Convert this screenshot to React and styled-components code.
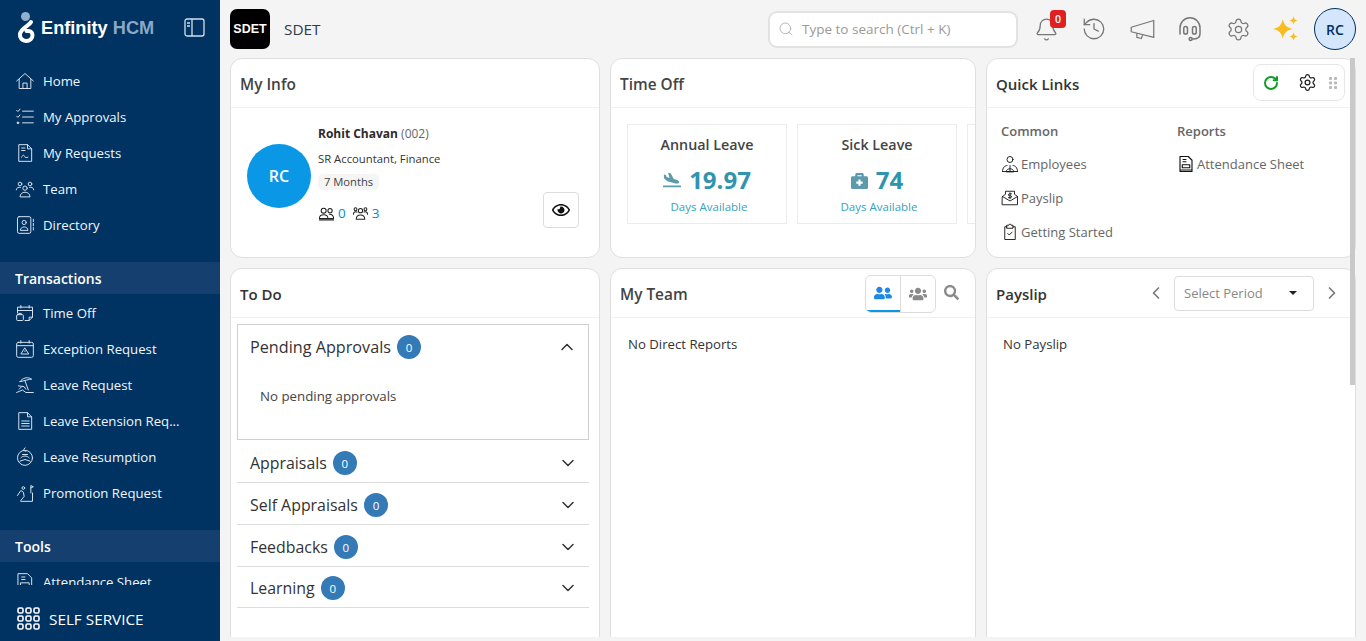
import React from 'react'
import styled, { createGlobalStyle } from 'styled-components'
import { ChevronDown, ChevronUp, ChevronLeft, ChevronRight, Search, RotateCw, Settings, History, Bell } from 'lucide-react'
import { FaPlaneArrival, FaBriefcaseMedical, FaUserFriends, FaUsers, FaSearch, FaRegEye } from 'react-icons/fa'

const Global = createGlobalStyle`
  html, body { margin: 0; height: 100%; overflow: hidden; }
  body { font-family: "Open Sans", "Noto Sans", sans-serif; background: #f4f4f4; color: #333; }
  * { box-sizing: border-box; }
`

const Shell = styled.div`
  display: flex;
  height: 641px;
  width: 1366px;
  overflow: hidden;
`

const Sidebar = styled.aside`
  width: 220px;
  flex: none;
  background: #003262;
  display: flex;
  flex-direction: column;
  color: #fff;
`

const Brand = styled.div`
  height: 63px;
  flex: none;
  display: flex;
  align-items: center;
  padding: 0 14px 7px 15px;
  svg { flex: none; }
`

const BrandName = styled.div`
  font-family: "Liberation Sans", Arial, sans-serif;
  font-weight: 700;
  font-size: 18.2px;
  margin-left: 4px;
  flex: 1;
  white-space: nowrap;
  span { color: #8ba8c6; }
`

const Nav = styled.nav`
  flex: 1;
  overflow: hidden;
  min-height: 0;
`

const NavItem = styled.div`
  height: 36px;
  display: flex;
  align-items: center;
  padding-left: 15px;
  gap: 8px;
  font-size: 13.2px;
  color: #f2f6fa;
  white-space: nowrap;
  svg { flex: none; color: #d5e0ec; }
`

const NavGroup = styled.div`
  height: 32px;
  margin-top: 19px;
  margin-bottom: ${p => p.$gap}px;
  background: #153f6e;
  display: flex;
  align-items: center;
  padding-left: 15px;
  font-size: 14px;
  font-weight: 600;
`

const SidebarFoot = styled.div`
  height: 56px;
  flex: none;
  display: flex;
  align-items: center;
  padding: 12px 0 0 17px;
  gap: 9px;
  font-size: 15.3px;
  background: #003262;
`

const Main = styled.main`
  flex: 1;
  min-width: 0;
  display: flex;
  flex-direction: column;
`

const Topbar = styled.header`
  height: 58px;
  flex: none;
  display: flex;
  align-items: center;
  padding: 0 10px;
`

const OrgLogo = styled.div`
  width: 40px;
  height: 40px;
  border-radius: 7px;
  background: #000;
  color: #fff;
  font-family: "Liberation Sans", Arial, sans-serif;
  font-weight: 700;
  font-size: 12.5px;
  display: flex;
  align-items: center;
  justify-content: center;
`

const OrgName = styled.div`
  margin-left: 14px;
  font-size: 15.3px;
  color: #2e3b4a;
  flex: 1;
`

const SearchBox = styled.div`
  width: 250px;
  height: 37px;
  background: #fff;
  border: 2px solid #e2e2e2;
  border-radius: 9px;
  display: flex;
  align-items: center;
  padding-left: 8px;
  gap: 8px;
  font-size: 13.5px;
  color: #9a9a9a;
  svg { color: #a5a5a5; }
`

const TopIcons = styled.div`
  display: flex;
  align-items: center;
  margin-left: 4px;
`

const TopIcon = styled.div`
  width: 48px;
  height: 30px;
  display: flex;
  align-items: center;
  justify-content: center;
  position: relative;
  color: #777;
`

const Badge = styled.span`
  position: absolute;
  top: -4px;
  left: 28px;
  width: 16px;
  height: 18px;
  border-radius: 4px;
  background: #e02020;
  color: #fff;
  font-size: 10.5px;
  font-weight: 600;
  display: flex;
  align-items: center;
  justify-content: center;
`

const Me = styled.div`
  width: 42px;
  height: 42px;
  margin-left: 4px;
  border-radius: 50%;
  background: #d3e6fb;
  border: 1px solid #00305f;
  color: #00305f;
  font-size: 14px;
  font-weight: 600;
  display: flex;
  align-items: center;
  justify-content: center;
`

const Board = styled.div`
  height: 579px;
  flex: none;
  overflow: hidden;
  position: relative;
  padding-left: 10px;
  display: grid;
  grid-template-columns: 370px 366px 370px;
  grid-template-rows: 200px 400px;
  column-gap: 10px;
  row-gap: 10px;
  align-content: start;
`

const ScrollThumb = styled.div`
  position: absolute;
  top: 0;
  right: 11px;
  width: 5px;
  height: 327px;
  background: #c9c9c9;
`

const Card = styled.section`
  background: #fff;
  border: 1px solid #dfdfdf;
  border-radius: 12px;
  overflow: hidden;
  display: flex;
  flex-direction: column;
  min-width: 0;
`

const CardHead = styled.div`
  height: 49px;
  flex: none;
  border-bottom: 1px solid #f1f1f1;
  display: flex;
  align-items: center;
  padding: 2px 9px 0 9px;
  position: relative;
`

const CardTitle = styled.h2`
  margin: 0;
  flex: 1;
  font-size: ${p => (p.$strong ? '15px' : '15.4px')};
  font-weight: 600;
  color: ${p => (p.$strong ? '#333' : '#444')};
`

const InfoBody = styled.div`
  display: flex;
  padding: 18px 20px 0 16px;
`

const Avatar = styled.div`
  width: 64px;
  height: 64px;
  margin-top: 18px;
  border-radius: 50%;
  background: #0a97e6;
  color: #fff;
  font-size: 16px;
  font-weight: 600;
  display: flex;
  align-items: center;
  justify-content: center;
  flex: none;
`

const InfoText = styled.div`
  margin-left: 7px;
  flex: 1;
`

const Name = styled.div`
  font-size: 12px;
  font-weight: 700;
  line-height: 16px;
  color: #2b2b2b;
  span { font-weight: 400; color: #666; }
`

const Role = styled.div`
  margin-top: 9px;
  font-size: 11.3px;
  line-height: 16px;
  color: #333;
`

const Chip = styled.div`
  display: inline-block;
  margin-top: 7px;
  padding: 0 6px;
  background: #f5f5f5;
  border-radius: 5px;
  font-size: 11.2px;
  line-height: 16px;
  color: #444;
`

const Counts = styled.div`
  display: flex;
  align-items: center;
  margin-top: 13px;
  font-size: 13.5px;
  line-height: 18px;
  color: #0a86cc;
  gap: 3px;
  svg { color: #222; }
  span { margin-right: 3px; }
`

const EyeButton = styled.button`
  width: 36px;
  height: 36px;
  margin-top: 66px;
  background: #fff;
  border: 1px solid #dcdcdc;
  border-radius: 4px;
  padding: 0;
  color: #111;
  display: flex;
  align-items: center;
  justify-content: center;
  flex: none;
`

const LeaveRow = styled.div`
  display: flex;
  gap: 10px;
  padding: 16px;
  overflow: hidden;
`

const LeaveBox = styled.div`
  width: 160px;
  height: 100px;
  flex: none;
  border: 1px solid #ececec;
  display: flex;
  flex-direction: column;
  align-items: center;
  padding-top: 10px;
`

const LeaveName = styled.div`
  font-size: 14.3px;
  font-weight: 600;
  line-height: 20px;
  color: #444;
`

const LeaveValue = styled.div`
  display: flex;
  align-items: center;
  gap: 8px;
  margin-top: 9px;
  font-size: 24px;
  line-height: 32px;
  font-weight: 700;
  color: #2f94ad;
  svg { color: #5b9bab; }
`

const LeaveCaption = styled.div`
  margin: 3px 0 0 4px;
  font-size: 11.5px;
  line-height: 16px;
  color: #3b9fb8;
`

const HeadTools = styled.div`
  position: absolute;
  top: 5px;
  right: 10px;
  width: 92px;
  height: 37px;
  background: #fff;
  border: 1px solid #e6e6e6;
  border-radius: 8px;
  display: flex;
  align-items: center;
  padding-left: 9px;
  gap: 11px;
`

const ToolGear = styled(Settings)`
  margin-left: 8px;
`

const LinkGrid = styled.div`
  display: grid;
  grid-template-columns: 176px 1fr;
  padding: 14px 0 0 14px;
`

const LinkHead = styled.div`
  font-size: 13px;
  font-weight: 600;
  line-height: 18px;
  color: #666;
  margin-bottom: 7px;
`

const LinkItem = styled.div`
  height: 34px;
  display: flex;
  align-items: center;
  gap: 2px;
  font-size: 13px;
  color: #666;
  white-space: nowrap;
  svg { color: #111; flex: none; }
`

const TodoBody = styled.div`
  padding: 6px 10px 0 6px;
`

const OpenPanel = styled.div`
  height: 116px;
  margin-bottom: 1px;
  border: 1px solid #cfcfcf;
`

const PanelHead = styled.div`
  height: ${p => p.$h}px;
  display: flex;
  align-items: center;
  padding: ${p => p.$top}px 11px 0 ${p => p.$left}px;
  font-size: ${p => p.$size}px;
  color: #333;
  gap: 6px;
  svg { margin-left: auto; color: #333; }
`

const PanelRow = styled.div`
  border-bottom: 1px solid #dcdcdc;
  &:last-child { margin-top: -1px; }
`

const Count = styled.span`
  width: 24px;
  height: 24px;
  border-radius: 50%;
  background: #337ab7;
  color: #fff;
  font-size: 11.5px;
  display: flex;
  align-items: center;
  justify-content: center;
`

const PanelNote = styled.div`
  padding: 18px 0 0 22px;
  font-size: 13.3px;
  line-height: 18px;
  color: #444;
`

const Empty = styled.div`
  padding: 17px 0 0 ${p => p.$left}px;
  font-size: 13.2px;
  line-height: 18px;
  color: #333;
`

const TeamTabs = styled.div`
  display: flex;
  width: 71px;
  height: 38px;
  margin: -1px 0 0;
  border: 1px solid #dcdcdc;
  border-radius: 6px;
  overflow: hidden;
`

const TeamTab = styled.div`
  flex: 1;
  display: flex;
  align-items: center;
  justify-content: center;
  color: ${p => (p.$active ? '#1e88e5' : '#8a8a8a')};
  border-bottom: ${p => (p.$active ? '2px solid #0a97e6' : '0')};
  & + & { border-left: 1px solid #dcdcdc; }
`

const TeamSearch = styled.div`
  width: 30px;
  margin-top: -3px;
  display: flex;
  justify-content: center;
  color: #8a8a8a;
`

const PeriodSelect = styled.div`
  width: 140px;
  height: 35px;
  margin: 0 8px;
  border: 1px solid #dcdcdc;
  border-radius: 4px;
  display: flex;
  align-items: center;
  justify-content: space-between;
  padding: 0 16px 0 9px;
  font-size: 13px;
  color: #888;
`

const Caret = styled.span`
  width: 0;
  height: 0;
  border-left: 4px solid transparent;
  border-right: 4px solid transparent;
  border-top: 4px solid #222;
`

const PayHead = styled.div`
  display: flex;
  align-items: center;
  margin: -2px 4px 0 0;
  svg { color: #777; }
`

/* icons the packages don't have, drawn to follow the reference */
const Line = ({ size = 20, sw = 1.2, children }) => (
  <svg width={size} height={size} viewBox="0 0 24 24" fill="none" stroke="currentColor" strokeWidth={sw} strokeLinecap="round" strokeLinejoin="round">
    {children}
  </svg>
)

const HomeIcon = () => <Line><path d="M2 12 12 3l10 9M5 10v11h14V10M9.5 21v-6.5h5V21" /></Line>
const ApprovalsIcon = () => <Line><path d="M2 4l1.5 1.5L6 2.5M2 11l1.5 1.5L6 9.5M9 5h13M9 12h13M9 19h13" /><circle cx="3.5" cy="19" r="1" fill="currentColor" /></Line>
const RequestsIcon = () => <Line><path d="M5 2h10l5 5v15H5zM15 2v5h5M8 6h4M8 9h4M8 17c1.5-3 2.5-3 3.5-1s2 2 4 1" /></Line>
const TeamIcon = () => <Line><circle cx="12" cy="11" r="2.6" /><circle cx="6" cy="6" r="2.2" /><circle cx="18" cy="6" r="2.2" /><path d="M6 21c0-7 12-7 12 0zM1.5 13c.5-3 3-3.5 5-3M22.5 13c-.5-3-3-3.5-5-3" /></Line>
const DirectoryIcon = () => <Line><rect x="3" y="2" width="16" height="20" rx="2" /><circle cx="11" cy="9" r="2.5" /><path d="M6.5 18c0-5 9-5 9 0zM22 5v3M22 10v3M22 15v3" /></Line>
const TimeOffIcon = () => <Line><path d="M3 12V5h18v12l-4 4h-5M3 9h18M7 3v3M17 3v3M17 21v-4h4" /><rect x="2" y="14" width="8" height="7" rx="1" /><path d="M4.5 14v-1.5h3V14" /></Line>
const ExceptionIcon = () => <Line><rect x="2" y="4" width="20" height="18" rx="2" /><path d="M2 8h20M7 2v3M17 2v3M12 11l4.5 7h-9zM12 14v1" /></Line>
const BeachIcon = () => <Line><path d="M6 8c3-5 10-6 14-3-3 0-9 2-14 3zM12 7l4 11M2 21l7-3 4 3h9M4 13l7 1 2 3M5 17l3-3" /></Line>
const FileLinesIcon = () => <Line><path d="M5 2h10l5 5v15H5zM15 2v5h5M8 12h9M8 15h9M8 18h9" /></Line>
const ResumeIcon = () => <Line><circle cx="12" cy="13" r="9" /><path d="M12 1l-2 3 3 1M7 13c3-3 7-3 10 0M6 17l6-2 6 2M9 9h6" /></Line>
const PromoteIcon = () => <Line><path d="M19 12V3l3 1.5L19 6M21 12v10H7M3 15l4-6 3 2 1 5-4 5" /><circle cx="10" cy="6" r="1.6" /></Line>
const SheetIcon = ({ size = 20, sw = 1.2 }) => <Line size={size} sw={sw}><path d="M4 2h11l5 5v15H4zM8 6h4M8 9h4M7 13h10v4H7zM4 20h16" /></Line>
const HeadsetIcon = () => <Line size={30} sw={1.2}><path d="M4 16v-5a8 8 0 0 1 16 0v5c0 3-3 4-6 4" /><rect x="7" y="10" width="3" height="6" rx="1.5" /><rect x="14" y="10" width="3" height="6" rx="1.5" /><circle cx="12.5" cy="20" r="1.2" /></Line>
const HornIcon = () => <Line size={27} sw={1.1}><path d="M2 10l20-6v15L2 14zM7 16v3l4 1 1-3" /></Line>
const EmployeesIcon = () => <Line size={18}><circle cx="12" cy="6" r="4" /><path d="M2 22c0-5 3-8 6-8M22 22c0-5-3-8-6-8M7 22c0-5 10-5 10 0zM12 14v8M2 22h20" /></Line>
const PayslipIcon = () => <Line size={18}><path d="M2 10l4-3V3h12v4l4 3v11H2zM2 10l10 6 10-6" /><path d="M14 6.5h-3c-1.500 0-1.500 2.500 0 2.500h2c1.500 0 1.500 2.500 0 2.500h-3M12 5v8" /></Line>
const ClipIcon = () => <Line size={18}><path d="M8 5H5v17h14V5h-3M8 3h2.500a1.500 1.500 0 0 1 3 0H16v4H8zM9 14l2 2 4-4" /></Line>
const PairIcon = () => <Line size={17} sw={1.5}><circle cx="8" cy="8" r="3.5" /><circle cx="17" cy="8" r="3" /><path d="M2 19c0-7 12-7 12 0zM16 13c3 0 6 2 6 6h-8M2 21h20" /></Line>
const GroupIcon = () => <Line size={17} sw={1.5}><circle cx="12" cy="8" r="3" /><circle cx="5" cy="6" r="2" /><circle cx="19" cy="6" r="2" /><path d="M6 20c0-8 12-8 12 0zM2 13c0-3 3-4 5-3M22 13c0-3-3-4-5-3" /></Line>

const Logo = () => (
  <svg width="22" height="34" viewBox="0 0 22 34" fill="none">
    <circle cx="10.500" cy="5.500" r="4.500" fill="#8fb0cf" />
    <path d="M16 11c-2 4-10 6-11 12a6 6 0 0 0 6 7c4 0 6.500-2.500 6.500-6 0-3-2.500-4.500-6-4" stroke="#fff" strokeWidth="4" strokeLinecap="round" />
  </svg>
)

const PanelToggle = () => (
  <svg width="22" height="20" viewBox="0 0 22 20" fill="none" stroke="#d5e0ec" strokeWidth="1.300">
    <rect x="1" y="1" width="19" height="17" rx="2" />
    <path d="M8 1v17M3 5h3M3 8h3" />
  </svg>
)

const AppGrid = () => (
  <svg width="23" height="24" viewBox="0 0 23 24" fill="none" stroke="#fff" strokeWidth="1.600">
    {[1, 9, 17].map(y => [1, 9, 17].map(x => <rect key={`${x}-${y}`} x={x} y={y} width="5" height="5" rx="1.500" />))}
  </svg>
)

const Sparkles = () => (
  <svg width="30" height="30" viewBox="0 0 28 28" fill="#fbbc1f">
    <path d="M11 5c1.500 5.500 3 7.500 9 9-6 1.500-7.500 3.500-9 9-1.500-5.500-3-7.500-9-9 6-1.500 7.500-3.500 9-9z" />
    <path d="M21 2c.5 2.500 1.500 3.500 4 4-2.500.5-3.500 1.500-4 4-.5-2.500-1.500-3.500-4-4 2.500-.5 3.500-1.500 4-4zM21 17c.5 2.500 1.500 3.500 4 4-2.500.5-3.500 1.500-4 4-.5-2.500-1.500-3.500-4-4 2.500-.5 3.500-1.500 4-4z" />
  </svg>
)

const Grip = () => (
  <svg width="10" height="14" viewBox="0 0 10 14" fill="#bbb">
    {[1, 5.500, 10].map(y => [1, 6].map(x => <rect key={`${x}-${y}`} x={x} y={y} width="3" height="3" rx=".8" />))}
  </svg>
)

const mainNav = [
  ['Home', HomeIcon],
  ['My Approvals', ApprovalsIcon],
  ['My Requests', RequestsIcon],
  ['Team', TeamIcon],
  ['Directory', DirectoryIcon],
]

const transactionNav = [
  ['Time Off', TimeOffIcon],
  ['Exception Request', ExceptionIcon],
  ['Leave Request', BeachIcon],
  ['Leave Extension Req...', FileLinesIcon],
  ['Leave Resumption', ResumeIcon],
  ['Promotion Request', PromoteIcon],
]

const todoRows = ['Appraisals', 'Self Appraisals', 'Feedbacks', 'Learning']

const renderNav = items => items.map(([label, Icon]) => (
  <NavItem key={label}><Icon />{label}</NavItem>
))

export default function App() {
  return (
    <Shell>
      <Global />
      <Sidebar>
        <Brand>
          <Logo />
          <BrandName>Enfinity <span>HCM</span></BrandName>
          <PanelToggle />
        </Brand>
        <Nav>
          {renderNav(mainNav)}
          <NavGroup $gap={1}>Transactions</NavGroup>
          {renderNav(transactionNav)}
          <NavGroup $gap={2}>Tools</NavGroup>
          <NavItem><SheetIcon />Attendance Sheet</NavItem>
        </Nav>
        <SidebarFoot><AppGrid />SELF SERVICE</SidebarFoot>
      </Sidebar>

      <Main>
        <Topbar>
          <OrgLogo>SDET</OrgLogo>
          <OrgName>SDET</OrgName>
          <SearchBox><Search size={16} strokeWidth={1.2} />Type to search (Ctrl + K)</SearchBox>
          <TopIcons>
            <TopIcon><Bell size={25} strokeWidth={1.2} /><Badge>0</Badge></TopIcon>
            <TopIcon><History size={26} strokeWidth={1.2} /></TopIcon>
            <TopIcon><HornIcon /></TopIcon>
            <TopIcon><HeadsetIcon /></TopIcon>
            <TopIcon><Settings size={25} strokeWidth={1.2} /></TopIcon>
            <TopIcon><Sparkles /></TopIcon>
          </TopIcons>
          <Me>RC</Me>
        </Topbar>

        <Board>
          <Card>
            <CardHead><CardTitle>My Info</CardTitle></CardHead>
            <InfoBody>
              <Avatar>RC</Avatar>
              <InfoText>
                <Name>Rohit Chavan <span>(002)</span></Name>
                <Role>SR Accountant, Finance</Role>
                <Chip>7 Months</Chip>
                <Counts><PairIcon /><span>0</span><GroupIcon /><span>3</span></Counts>
              </InfoText>
              <EyeButton><FaRegEye size={18} /></EyeButton>
            </InfoBody>
          </Card>

          <Card>
            <CardHead><CardTitle>Time Off</CardTitle></CardHead>
            <LeaveRow>
              <LeaveBox>
                <LeaveName>Annual Leave</LeaveName>
                <LeaveValue><FaPlaneArrival size={18} />19.97</LeaveValue>
                <LeaveCaption>Days Available</LeaveCaption>
              </LeaveBox>
              <LeaveBox>
                <LeaveName>Sick Leave</LeaveName>
                <LeaveValue><FaBriefcaseMedical size={17} />74</LeaveValue>
                <LeaveCaption>Days Available</LeaveCaption>
              </LeaveBox>
              <LeaveBox />
            </LeaveRow>
          </Card>

          <Card>
            <CardHead>
              <CardTitle $strong>Quick Links</CardTitle>
              <HeadTools>
                <RotateCw size={16} strokeWidth={3} color="#0f9d2a" />
                <ToolGear size={19} strokeWidth={1.6} color="#222" />
                <Grip />
              </HeadTools>
            </CardHead>
            <LinkGrid>
              <div>
                <LinkHead>Common</LinkHead>
                <LinkItem><EmployeesIcon />Employees</LinkItem>
                <LinkItem><PayslipIcon />Payslip</LinkItem>
                <LinkItem><ClipIcon />Getting Started</LinkItem>
              </div>
              <div>
                <LinkHead>Reports</LinkHead>
                <LinkItem><SheetIcon size={18} sw={1.5} />Attendance Sheet</LinkItem>
              </div>
            </LinkGrid>
          </Card>

          <Card>
            <CardHead><CardTitle $strong>To Do</CardTitle></CardHead>
            <TodoBody>
              <OpenPanel>
                <PanelHead $h={44} $top={0} $left={12} $size={16.2}>Pending Approvals <Count>0</Count><ChevronUp size={20} strokeWidth={1.8} /></PanelHead>
                <PanelNote>No pending approvals</PanelNote>
              </OpenPanel>
              {todoRows.map(label => (
                <PanelRow key={label}>
                  <PanelHead $h={41} $top={3} $left={13} $size={15.9}>{label} <Count>0</Count><ChevronDown size={20} strokeWidth={1.8} /></PanelHead>
                </PanelRow>
              ))}
            </TodoBody>
          </Card>

          <Card>
            <CardHead>
              <CardTitle>My Team</CardTitle>
              <TeamTabs>
                <TeamTab $active><FaUserFriends size={18} /></TeamTab>
                <TeamTab><FaUsers size={18} /></TeamTab>
              </TeamTabs>
              <TeamSearch><FaSearch size={15} /></TeamSearch>
            </CardHead>
            <Empty $left={17}>No Direct Reports</Empty>
          </Card>

          <Card>
            <CardHead>
              <CardTitle $strong>Payslip</CardTitle>
              <PayHead>
                <ChevronLeft size={20} strokeWidth={2} />
                <PeriodSelect>Select Period<Caret /></PeriodSelect>
                <ChevronRight size={20} strokeWidth={2} />
              </PayHead>
            </CardHead>
            <Empty $left={16}>No Payslip</Empty>
          </Card>

          <ScrollThumb />
        </Board>
      </Main>
    </Shell>
  )
}
